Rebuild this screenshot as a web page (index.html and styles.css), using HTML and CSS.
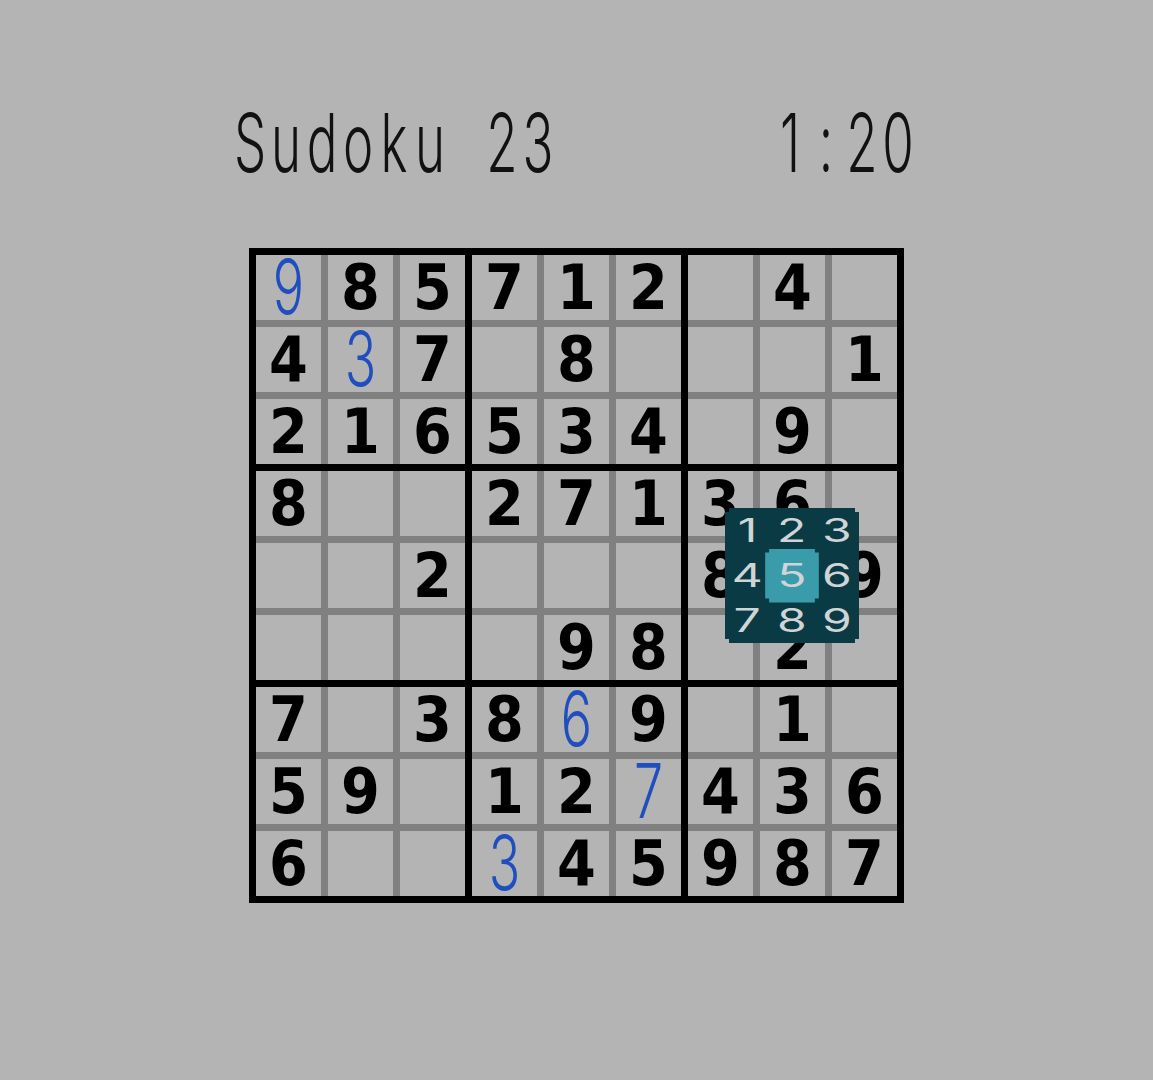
FILE: index.html
```html
<!DOCTYPE html>
<html>
<head>
<meta charset="utf-8">
<title>Sudoku 23</title>
<link rel="stylesheet" href="styles.css">
</head>
<body>
<div class="screen">
  <header class="header">
    <div class="title"><span>S</span><span>u</span><span>d</span><span>o</span><span>k</span><span>u</span><span>&nbsp;</span><span>2</span><span>3</span></div>
    <div class="title"><span>1</span><span>:</span><span>2</span><span>0</span></div>
  </header>
  <div class="board">
    <div class="box">
      <div class="cell user"><span>9</span></div><div class="cell">8</div><div class="cell">5</div>
      <div class="cell">4</div><div class="cell user"><span>3</span></div><div class="cell">7</div>
      <div class="cell">2</div><div class="cell">1</div><div class="cell">6</div>
    </div>
    <div class="box">
      <div class="cell">7</div><div class="cell">1</div><div class="cell">2</div>
      <div class="cell"></div><div class="cell">8</div><div class="cell"></div>
      <div class="cell">5</div><div class="cell">3</div><div class="cell">4</div>
    </div>
    <div class="box">
      <div class="cell"></div><div class="cell">4</div><div class="cell"></div>
      <div class="cell"></div><div class="cell"></div><div class="cell">1</div>
      <div class="cell"></div><div class="cell">9</div><div class="cell"></div>
    </div>
    <div class="box">
      <div class="cell">8</div><div class="cell"></div><div class="cell"></div>
      <div class="cell"></div><div class="cell"></div><div class="cell">2</div>
      <div class="cell"></div><div class="cell"></div><div class="cell"></div>
    </div>
    <div class="box">
      <div class="cell">2</div><div class="cell">7</div><div class="cell">1</div>
      <div class="cell"></div><div class="cell"></div><div class="cell"></div>
      <div class="cell"></div><div class="cell">9</div><div class="cell">8</div>
    </div>
    <div class="box">
      <div class="cell">3</div><div class="cell">6</div><div class="cell"></div>
      <div class="cell">8</div><div class="cell"></div><div class="cell">9</div>
      <div class="cell"></div><div class="cell">2</div><div class="cell"></div>
    </div>
    <div class="box">
      <div class="cell">7</div><div class="cell"></div><div class="cell">3</div>
      <div class="cell">5</div><div class="cell">9</div><div class="cell"></div>
      <div class="cell">6</div><div class="cell"></div><div class="cell"></div>
    </div>
    <div class="box">
      <div class="cell">8</div><div class="cell user"><span>6</span></div><div class="cell">9</div>
      <div class="cell">1</div><div class="cell">2</div><div class="cell user"><span>7</span></div>
      <div class="cell user"><span>3</span></div><div class="cell">4</div><div class="cell">5</div>
    </div>
    <div class="box">
      <div class="cell"></div><div class="cell">1</div><div class="cell"></div>
      <div class="cell">4</div><div class="cell">3</div><div class="cell">6</div>
      <div class="cell">9</div><div class="cell">8</div><div class="cell">7</div>
    </div>

    <div class="picker">
      <div class="opt"><span>1</span></div><div class="opt"><span>2</span></div><div class="opt"><span>3</span></div>
      <div class="opt"><span>4</span></div><div class="opt sel"><span>5</span></div><div class="opt"><span>6</span></div>
      <div class="opt"><span>7</span></div><div class="opt"><span>8</span></div><div class="opt"><span>9</span></div>
    </div>
  </div>
</div>
</body>
</html>
```
FILE: styles.css
```css
html, body {
  margin: 0;
  padding: 0;
  background: #b4b4b4;
}

.screen {
  width: 1153px;
  height: 1080px;
  overflow: hidden;
}

.header {
  display: flex;
  justify-content: space-between;
  width: 684px;
  margin: 128px 0 0 232px;
  height: 51px;
}

.title {
  display: flex;
  font-family: "Inter", "DejaVu Sans", sans-serif;
  font-weight: 300;
  font-size: 51px;
  line-height: 51px;
  color: #111;
  transform: scaleY(1.6);
  transform-origin: center 44px;
}

.title span {
  display: block;
  width: 36px;
  text-align: center;
}

.board {
  position: relative;
  width: 655px;
  height: 655px;
  box-sizing: border-box;
  margin: 69px auto 0;
  padding: 7px;
  background: #000;
  display: grid;
  grid-template-columns: repeat(3, 209px);
  grid-template-rows: repeat(3, 209px);
  gap: 7px;
}

.box {
  background: #808080;
  display: grid;
  grid-template-columns: repeat(3, 65px);
  grid-template-rows: repeat(3, 65px);
  gap: 7px;
}

.cell {
  background: #b4b4b4;
  display: flex;
  align-items: center;
  justify-content: center;
  font-family: "DejaVu Sans Condensed", "DejaVu Sans Mono", monospace;
  font-weight: bold;
  font-size: 62px;
  line-height: 62px;
  color: #000;
}

.cell.user {
  color: #1f4fbf;
  font-family: "Inter", "DejaVu Sans", sans-serif;
  font-weight: 300;
  font-size: 52px;
  line-height: 52px;
}

.cell.user span {
  display: block;
  transform: scaleY(1.45);
}

.picker {
  position: absolute;
  left: 476px;
  top: 260px;
  width: 134px;
  height: 135px;
  background: #0a3a44;
  display: grid;
  grid-template-columns: repeat(3, 1fr);
  grid-template-rows: repeat(3, 1fr);
  clip-path: polygon(4px 0, calc(100% - 4px) 0, calc(100% - 4px) 4px, 100% 4px, 100% calc(100% - 4px), calc(100% - 4px) calc(100% - 4px), calc(100% - 4px) 100%, 4px 100%, 4px calc(100% - 4px), 0 calc(100% - 4px), 0 4px, 4px 4px);
}

.opt {
  display: flex;
  align-items: center;
  justify-content: center;
  font-family: "Inter", "DejaVu Sans", sans-serif;
  font-weight: 400;
  font-size: 32px;
  line-height: 32px;
  color: #cfd4d6;
}

.opt span {
  display: block;
  transform: scaleX(1.5);
}

.opt.sel {
  margin: -4.5px;
  background: #3a9baa;
  clip-path: polygon(4px 0, calc(100% - 4px) 0, calc(100% - 4px) 4px, 100% 4px, 100% calc(100% - 4px), calc(100% - 4px) calc(100% - 4px), calc(100% - 4px) 100%, 4px 100%, 4px calc(100% - 4px), 0 calc(100% - 4px), 0 4px, 4px 4px);
}
```
